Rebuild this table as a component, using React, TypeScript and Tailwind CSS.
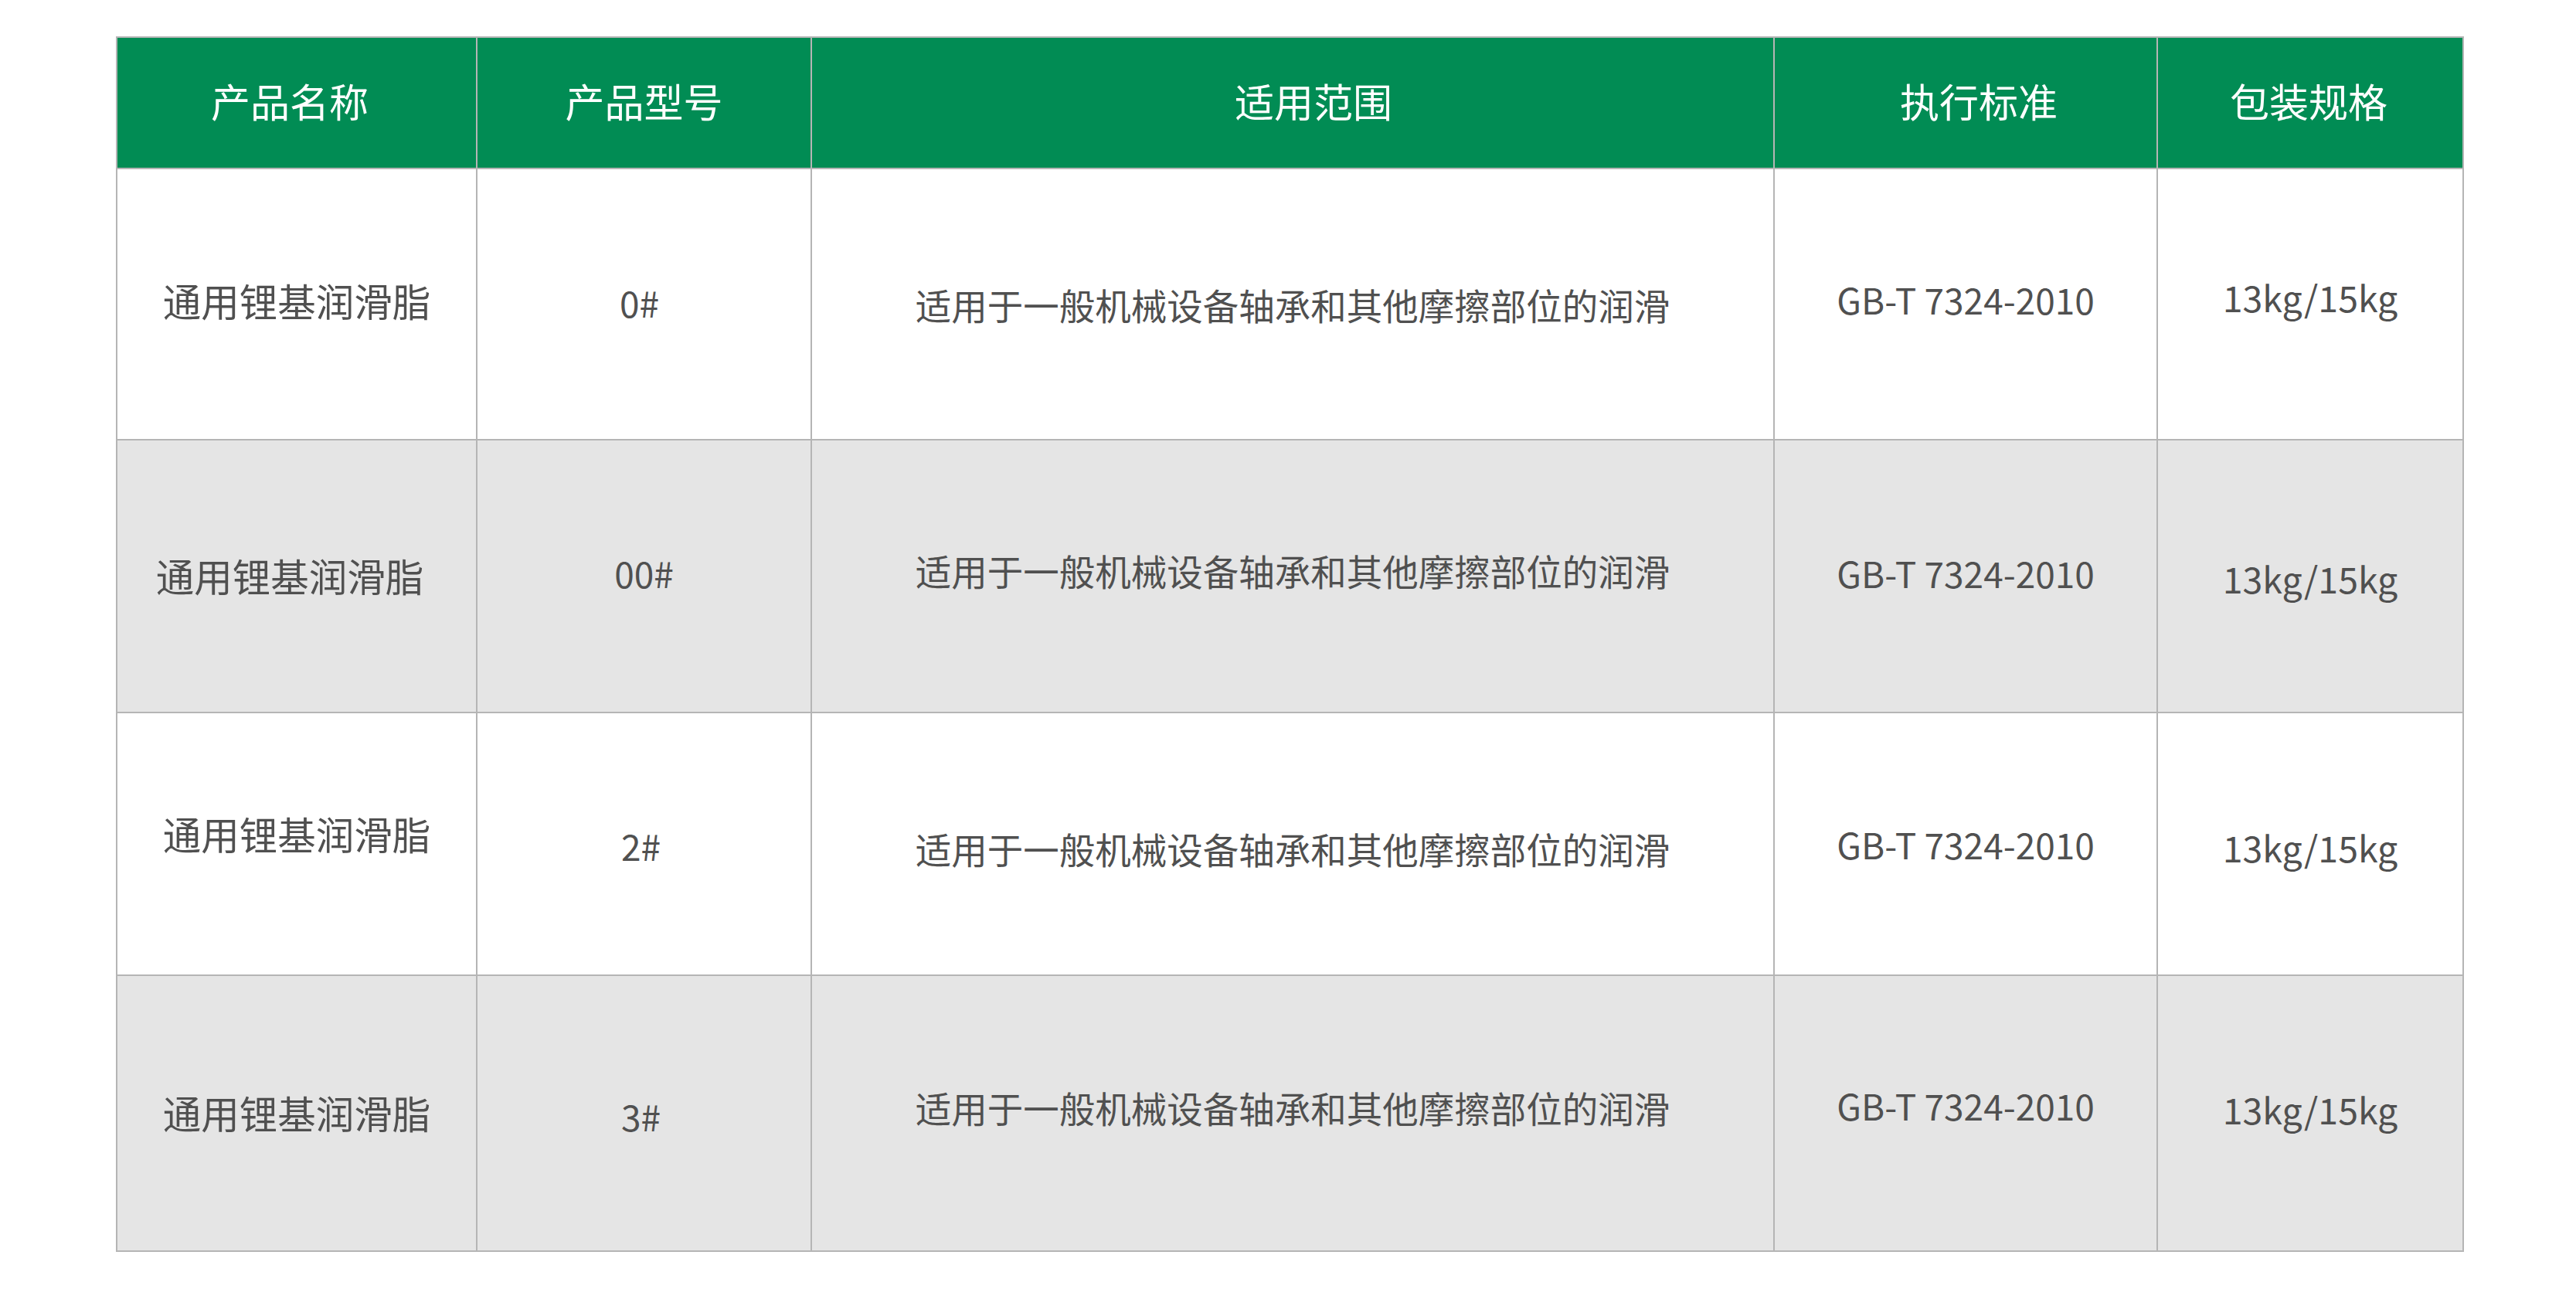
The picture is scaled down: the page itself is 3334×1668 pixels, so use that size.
const font = { fontFamily: '"Noto Sans CJK SC", "Noto Sans", sans-serif' }

// header labels with small nudges to match the original design
const headers = [
  { t: '产品名称', cls: 'pr-[18px]' },
  { t: '产品型号', cls: '' },
  { t: '适用范围', cls: 'pl-[54px]' },
  { t: '执行标准', cls: 'pl-[34px]' },
  { t: '包装规格', cls: 'pr-[4px]' },
]

const usage = '适用于一般机械设备轴承和其他摩擦部位的润滑'

const rows = [
  {
    model: '0#',
    h: 'h-[351px]',
    bg: 'bg-white',
    pad: ['pb-[8px]', 'pb-[4px] pr-[12px]', '', 'pb-[12px]', 'pb-[20px]'],
  },
  {
    model: '00#',
    h: 'h-[353px]',
    bg: 'bg-[#e5e5e5]',
    pad: ['pr-[18px]', 'pb-[8px]', 'pb-[16px]', 'pb-[8px]', 'pt-[4px]'],
  },
  {
    model: '2#',
    h: 'h-[340px]',
    bg: 'bg-white',
    pad: ['pb-[26px]', 'pt-[4px] pr-[8px]', 'pt-[12px]', '', 'pt-[8px]'],
  },
  {
    model: '3#',
    h: 'h-[357px]',
    bg: 'bg-[#e5e5e5]',
    pad: ['', 'pt-[8px] pr-[8px]', 'pb-[16px]', 'pb-[20px]', 'pb-[12px]'],
  },
]

const cell = 'border-2 border-[#b5b5b5] text-center text-[#505050]'

export default function App() {
  return (
    <div className="min-h-[1668px] w-[3334px] bg-white pt-[47px] pl-[150px]" style={font}>
      <table className="w-[3037px] table-fixed border-collapse border-2 border-[#bdbdbd]">
        <colgroup>
          <col className="w-[466px]" />
          <col className="w-[433px]" />
          <col className="w-[1246px]" />
          <col className="w-[496px]" />
          <col className="w-[396px]" />
        </colgroup>
        <thead>
          <tr className="h-[170px] bg-[#018c54]">
            {headers.map((h) => (
              <th
                key={h.t}
                className={`border-2 border-[#b5b5b5] pb-[6px] text-center text-[51px] font-normal text-white ${h.cls}`}
              >
                {h.t}
              </th>
            ))}
          </tr>
        </thead>
        <tbody>
          {rows.map((r, i) => (
            <tr key={i} className={`${r.h} ${r.bg}`}>
              <td className={`${cell} text-[49.5px] ${r.pad[0]}`}>通用锂基润滑脂</td>
              <td className={`${cell} text-[46px] ${r.pad[1]}`}>{r.model}</td>
              <td className={`${cell} text-[46.5px] ${r.pad[2]}`}>{usage}</td>
              <td className={`${cell} text-[46px] ${r.pad[3]}`}>GB-T 7324-2010</td>
              <td className={`${cell} text-[46.5px] ${r.pad[4]}`}>13kg/15kg</td>
            </tr>
          ))}
        </tbody>
      </table>
    </div>
  )
}
